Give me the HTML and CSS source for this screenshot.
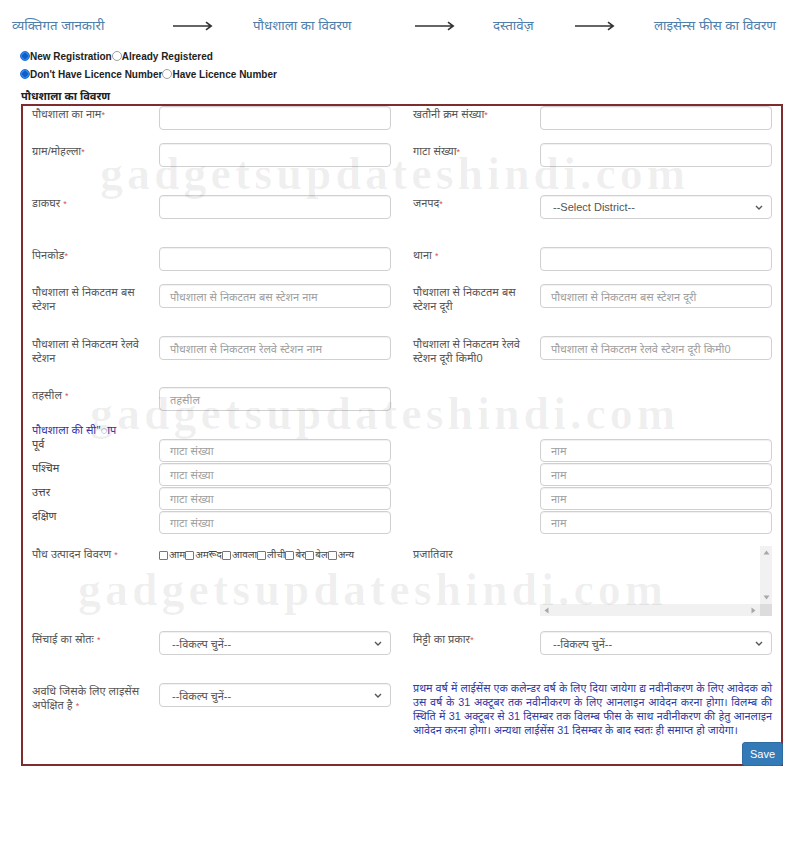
FILE: index.html
```html
<!DOCTYPE html>
<html lang="hi">
<head>
<meta charset="utf-8">
<title>पौधशाला का विवरण</title>
<link rel="stylesheet" href="styles.css">
</head>
<body>
<div class="steps">
  <div class="step">व्यक्तिगत जानकारी</div>
  <div class="arrow"><svg width="40" height="10" viewBox="0 0 40 10"><path d="M0 5H38M33 1.2L38.2 5L33 8.8" stroke="#333" stroke-width="1.6" fill="none"/></svg></div>
  <div class="step">पौधशाला का विवरण</div>
  <div class="arrow"><svg width="40" height="10" viewBox="0 0 40 10"><path d="M0 5H38M33 1.2L38.2 5L33 8.8" stroke="#333" stroke-width="1.6" fill="none"/></svg></div>
  <div class="step">दस्तावेज़</div>
  <div class="arrow"><svg width="40" height="10" viewBox="0 0 40 10"><path d="M0 5H38M33 1.2L38.2 5L33 8.8" stroke="#333" stroke-width="1.6" fill="none"/></svg></div>
  <div class="step">लाइसेन्स फीस का विवरण</div>
</div>

<div class="choices">
  <div class="choice-row"><span class="radio on"></span>New Registration<span class="radio"></span>Already Registered</div>
  <div class="choice-row"><span class="radio on"></span>Don't Have Licence Number<span class="radio"></span>Have Licence Number</div>
</div>

<div class="section-title">पौधशाला का विवरण</div>

<div class="box">
  <div class="row after-s">
    <div class="field"><div class="lbl">पौधशाला का नाम<span class="req">*</span></div><div class="input"></div></div>
    <div class="field"><div class="lbl">खतौनी क्रम संख्या<span class="req">*</span></div><div class="input"></div></div>
  </div>
  <div class="row after-l">
    <div class="field"><div class="lbl">ग्राम/मोहल्ला<span class="req">*</span></div><div class="input"></div></div>
    <div class="field"><div class="lbl">गाटा संख्या<span class="req">*</span></div><div class="input"></div></div>
  </div>
  <div class="row after-l">
    <div class="field"><div class="lbl">डाकघर <span class="req">*</span></div><div class="input"></div></div>
    <div class="field"><div class="lbl">जनपद<span class="req">*</span></div><div class="input select"><span>--Select District--</span><svg width="8" height="5" viewBox="0 0 8 5"><path d="M1 1L4 4L7 1" stroke="#555" stroke-width="1.4" fill="none"/></svg></div></div>
  </div>
  <div class="row after-s">
    <div class="field"><div class="lbl">पिनकोड<span class="req">*</span></div><div class="input"></div></div>
    <div class="field"><div class="lbl">थाना <span class="req">*</span></div><div class="input"></div></div>
  </div>
  <div class="row after-l">
    <div class="field"><div class="lbl">पौधशाला से निकटतम बस<br>स्टेशन</div><div class="input">पौधशाला से निकटतम बस स्टेशन नाम</div></div>
    <div class="field"><div class="lbl">पौधशाला से निकटतम बस<br>स्टेशन दूरी</div><div class="input">पौधशाला से निकटतम बस स्टेशन दूरी</div></div>
  </div>
  <div class="row after-m">
    <div class="field"><div class="lbl">पौधशाला से निकटतम रेलवे<br>स्टेशन</div><div class="input">पौधशाला से निकटतम रेलवे स्टेशन नाम</div></div>
    <div class="field"><div class="lbl">पौधशाला से निकटतम रेलवे<br>स्टेशन दूरी किमी0</div><div class="input">पौधशाला से निकटतम रेलवे स्टेशन दूरी किमी0</div></div>
  </div>
  <div class="row">
    <div class="field"><div class="lbl">तहसील <span class="req">*</span></div><div class="input">तहसील</div></div>
  </div>

  <div class="boundary-title">पौधशाला की सी"ाप</div>
  <div class="row brow">
    <div class="field"><div class="lbl blbl">पूर्व</div><div class="input short">गाटा संख्या</div></div>
    <div class="field"><div class="lbl"></div><div class="input short">नाम</div></div>
  </div>
  <div class="row brow">
    <div class="field"><div class="lbl blbl">पश्चिम</div><div class="input short">गाटा संख्या</div></div>
    <div class="field"><div class="lbl"></div><div class="input short">नाम</div></div>
  </div>
  <div class="row brow">
    <div class="field"><div class="lbl blbl">उत्तर</div><div class="input short">गाटा संख्या</div></div>
    <div class="field"><div class="lbl"></div><div class="input short">नाम</div></div>
  </div>
  <div class="row brow">
    <div class="field"><div class="lbl blbl">दक्षिण</div><div class="input short">गाटा संख्या</div></div>
    <div class="field"><div class="lbl"></div><div class="input short">नाम</div></div>
  </div>

  <div class="row plants">
    <div class="field"><div class="lbl">पौध उत्पादन विवरण <span class="req">*</span></div>
      <div class="checks"><span class="cb"></span>आम<span class="cb"></span>अमरूद<span class="cb"></span>आवला<span class="cb"></span>लीची<span class="cb"></span>बेर<span class="cb"></span>बेल<span class="cb"></span>अन्य</div>
    </div>
    <div class="field"><div class="lbl">प्रजातिवार</div>
      <div class="tarea">
        <div class="ta-body"></div>
        <div class="vbar"><svg width="7" height="5" viewBox="0 0 7 5"><path d="M3.5 0.5L6.5 4.5H0.5Z" fill="#a8a8a8"/></svg><svg width="7" height="5" viewBox="0 0 7 5"><path d="M3.5 4.5L6.5 0.5H0.5Z" fill="#a8a8a8"/></svg></div>
        <div class="hbar"><svg width="5" height="7" viewBox="0 0 5 7"><path d="M0.5 3.5L4.5 0.5V6.5Z" fill="#a8a8a8"/></svg><svg width="5" height="7" viewBox="0 0 5 7"><path d="M4.5 3.5L0.5 0.5V6.5Z" fill="#a8a8a8"/></svg></div>
        <div class="corner"></div>
      </div>
    </div>
  </div>

  <div class="row irrigation">
    <div class="field"><div class="lbl">सिंचाई का स्रोतः <span class="req">*</span></div><div class="input select"><span>--विकल्प चुनें--</span><svg width="8" height="5" viewBox="0 0 8 5"><path d="M1 1L4 4L7 1" stroke="#555" stroke-width="1.4" fill="none"/></svg></div></div>
    <div class="field"><div class="lbl">मिट्टी का प्रकार<span class="req">*</span></div><div class="input select"><span>--विकल्प चुनें--</span><svg width="8" height="5" viewBox="0 0 8 5"><path d="M1 1L4 4L7 1" stroke="#555" stroke-width="1.4" fill="none"/></svg></div></div>
  </div>

  <div class="row period">
    <div class="field"><div class="lbl">अवधि जिसके लिए लाइसेंस<br>अपेक्षित है <span class="req">*</span></div><div class="input select"><span>--विकल्प चुनें--</span><svg width="8" height="5" viewBox="0 0 8 5"><path d="M1 1L4 4L7 1" stroke="#555" stroke-width="1.4" fill="none"/></svg></div></div>
    <p class="note">प्रथम वर्ष में लाईसेंस एक कलेन्डर वर्ष के लिए दिया जायेगा द्य नवीनीकरण के लिए आवेदक को उस वर्ष के 31 अक्टूबर तक नवीनीकरण के लिए आनलाइन आवेदन करना होगा। विलम्ब की स्थिति में 31 अक्टूबर से 31 दिसम्बर तक विलम्ब फीस के साथ नवीनीकरण की हेतु आनलाइन आवेदन करना होगा। अन्यथा लाईसेंस 31 दिसम्बर के बाद स्वतः ही समाप्त हो जायेगा।</p>
  </div>

  <button class="save">Save</button>
</div>

<div class="wm wm1">gadgetsupdateshindi.com</div>
<div class="wm wm2">gadgetsupdateshindi.com</div>
<div class="wm wm3">gadgetsupdateshindi.com</div>
</body>
</html>
```
FILE: styles.css
```css
* { box-sizing: border-box; }

body {
  margin: 0;
  width: 803px;
  height: 859px;
  overflow: hidden;
  position: relative;
  background: #fff;
  color: #333;
  font-family: "Liberation Sans", Arial, "Noto Sans", sans-serif;
}

/* step header */
.steps {
  height: 47px;
  padding: 18px 0 0 12px;
  display: grid;
  grid-template-columns: 161px 80px 162px 78px 82px 79px auto;
  align-items: start;
}
.step {
  font-size: 13.3px;
  line-height: 16px;
  color: #4f7eab;
  white-space: nowrap;
}
.arrow { height: 16px; display: flex; align-items: center; }
.arrow svg { display: block; }

/* radios */
.choices { font-size: 10px; font-weight: bold; color: #222; }
.choice-row {
  height: 18px;
  padding-left: 20px;
  display: flex;
  align-items: center;
}
.radio {
  width: 10px;
  height: 10px;
  border-radius: 50%;
  border: 1px solid #a0a0a0;
  background: #fff;
  display: inline-block;
}
.radio.on {
  border-color: #1a6fd8;
  background: radial-gradient(circle, #0d5fc8 0 2.6px, #2f86ee 3px);
}

.section-title {
  height: 21px;
  padding: 5px 0 0 21px;
  line-height: 16px;
  font-size: 11px;
  font-weight: bold;
  color: #222;
}

/* form box */
.box {
  position: relative;
  margin-left: 21px;
  width: 762px;
  border: 2px solid #7e2c2e;
  padding: 0 9px 27px;
}
.row { display: flex; gap: 22px; }
.after-s { margin-bottom: 13px; }
.after-m { margin-bottom: 27px; }
.after-l { margin-bottom: 28px; }

.field {
  display: grid;
  grid-template-columns: 127px 232px;
  align-items: start;
  height: 24px;
}
.lbl {
  font-size: 11px;
  line-height: 14px;
  padding-top: 1px;
  color: #555;
}
.req { color: #d9534f; font-size: 9px; }

.input {
  height: 24px;
  border: 1px solid #d0d0d0;
  border-radius: 4px;
  box-shadow: inset 0 1px 1px rgba(0,0,0,.06);
  padding: 0 10px;
  display: flex;
  align-items: center;
  font-size: 11px;
  color: #a0a0a0;
  white-space: nowrap;
  overflow: hidden;
  background: transparent;
}
.select {
  justify-content: space-between;
  padding: 0 8px 0 12px;
  color: #555;
}
.select svg { flex: none; }

.boundary-title {
  margin-top: 10px;
  height: 18px;
  line-height: 18px;
  font-size: 11px;
  color: #3535a6;
}
.brow { margin-bottom: 1px; }
.brow .field { height: 23px; }
.input.short { height: 23px; }
.blbl { padding-top: 0; margin-top: -2px; color: #444; }

.plants { margin-top: 12px; }
.plants .field { height: auto; }
.checks {
  display: flex;
  align-items: center;
  font-size: 10px;
  color: #444;
  padding-top: 2px;
  line-height: 14px;
}
.cb {
  width: 9px;
  height: 9px;
  border: 1px solid #777;
  border-radius: 1px;
  display: inline-block;
  margin-right: 1px;
}
.tarea {
  height: 70px;
  display: grid;
  grid-template-columns: 1fr 12px;
  grid-template-rows: 1fr 12px;
}
.vbar {
  background: #f1f1f1;
  display: flex;
  flex-direction: column;
  justify-content: space-between;
  align-items: center;
  padding: 4px 0;
}
.hbar {
  background: #f1f1f1;
  display: flex;
  justify-content: space-between;
  align-items: center;
  padding: 0 4px;
}
.corner { background: #dcdcdc; }
.vbar svg, .hbar svg { display: block; }

.irrigation { margin-top: 15px; }
.period { margin-top: 28px; }
.note {
  margin: -2px 0 0;
  width: 359px;
  font-size: 10.8px;
  line-height: 14px;
  color: #2f3ba6;
  text-align: justify;
}

.save {
  position: absolute;
  right: -2px;
  bottom: -2px;
  width: 41px;
  height: 24px;
  padding: 0;
  border: 1px solid #2e6da4;
  border-radius: 3px;
  background: #337ab7;
  color: #fff;
  font-family: "Liberation Sans", Arial, sans-serif;
  font-size: 11px;
}

/* watermark overlay */
.wm {
  position: absolute;
  font-family: "Liberation Serif", "Times New Roman", serif;
  font-weight: bold;
  font-size: 46px;
  letter-spacing: 4px;
  line-height: 1;
  color: rgba(0,0,0,0.06);
  white-space: nowrap;
  pointer-events: none;
}
.wm1 { left: 100px; top: 151px; }
.wm2 { left: 90px; top: 391px; }
.wm3 { left: 78px; top: 567px; }
```
